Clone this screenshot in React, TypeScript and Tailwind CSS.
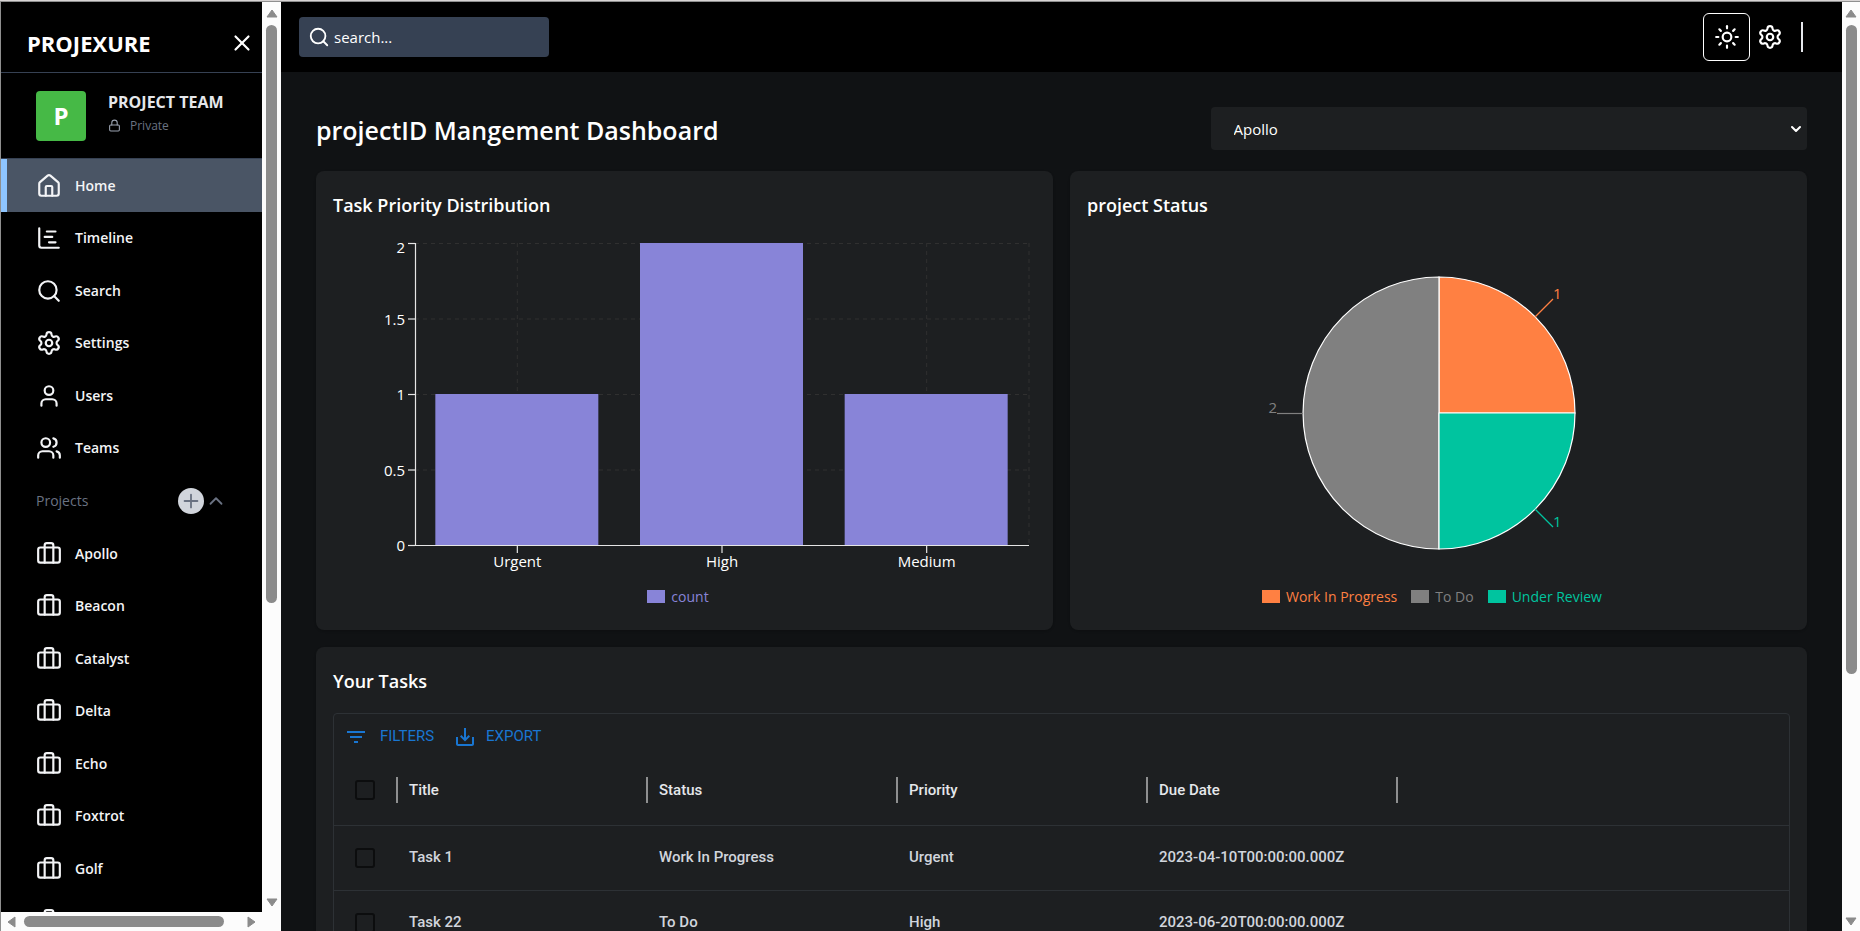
import React, { useState } from "react";
import {
  Briefcase,
  ChartGantt,
  ChevronDown,
  ChevronUp,
  House,
  Lock,
  LucideIcon,
  Plus,
  Search,
  Settings,
  Sun,
  User,
  Users,
  X,
} from "lucide-react";

interface Task {
  title: string;
  status: string;
  priority: string;
  dueDate: string;
}

const links: { label: string; icon: LucideIcon }[] = [
  { label: "Home", icon: House },
  { label: "Timeline", icon: ChartGantt },
  { label: "Search", icon: Search },
  { label: "Settings", icon: Settings },
  { label: "Users", icon: User },
  { label: "Teams", icon: Users },
];

const projects = ["Apollo", "Beacon", "Catalyst", "Delta", "Echo", "Foxtrot", "Golf", "Hotel"];

const priorities = [
  { name: "Urgent", count: 1 },
  { name: "High", count: 2 },
  { name: "Medium", count: 1 },
];

const statuses = [
  { name: "Work In Progress", color: "#ff8042" },
  { name: "To Do", color: "#808080" },
  { name: "Under Review", color: "#00c49f" },
];

const tasks: Task[] = [
  { title: "Task 1", status: "Work In Progress", priority: "Urgent", dueDate: "2023-04-10T00:00:00.000Z" },
  { title: "Task 22", status: "To Do", priority: "High", dueDate: "2023-06-20T00:00:00.000Z" },
];

const columns = ["Title", "Status", "Priority", "Due Date"];

function VerticalScrollbar({ width, thumb }: { width: string; thumb: string }) {
  return (
    <div className={`flex shrink-0 flex-col items-center bg-[#fcfcfc] pt-[7px] pb-[5px] ${width}`}>
      <svg width="12" height="9" viewBox="0 0 12 9" className="mb-[7px] shrink-0">
        <path d="M6 1 11 8H1z" fill="#8b8b8b" stroke="#8b8b8b" strokeLinejoin="round" />
      </svg>
      <div className="min-h-0 w-full flex-1">
        <div className={`mx-auto w-[11px] rounded-full bg-[#8b8b8b] ${thumb}`} />
      </div>
      <svg width="12" height="9" viewBox="0 0 12 9" className="shrink-0">
        <path d="M6 8 11 1H1z" fill="#8b8b8b" stroke="#8b8b8b" strokeLinejoin="round" />
      </svg>
    </div>
  );
}

function HorizontalScrollbar() {
  return (
    <div className="flex h-[19px] shrink-0 items-center bg-[#fcfcfc] px-[6px]">
      <svg width="9" height="12" viewBox="0 0 9 12" className="mr-2 shrink-0">
        <path d="M1 6 8 1v10z" fill="#8b8b8b" stroke="#8b8b8b" strokeLinejoin="round" />
      </svg>
      <div className="flex-1">
        <div className="h-[11px] w-[200px] rounded-full bg-[#8b8b8b]" />
      </div>
      <svg width="9" height="12" viewBox="0 0 9 12" className="shrink-0">
        <path d="M8 6 1 1v10z" fill="#8b8b8b" stroke="#8b8b8b" strokeLinejoin="round" />
      </svg>
    </div>
  );
}

function SidebarLink({ label, icon: Icon, active }: { label: string; icon: LucideIcon; active?: boolean }) {
  return (
    <li className="shrink-0 odd:h-[53px] even:h-[52px]">
      <a href="#" className={`flex h-full items-center ${active ? "bg-gray-600" : ""}`}>
        <span className={`w-[6px] self-stretch ${active ? "bg-blue-300" : ""}`} />
        <Icon size={26} strokeWidth={2} className="ml-[29px] text-gray-100" />
        <span className="ml-[13px] text-[14px] leading-[18px] font-semibold text-gray-100">{label}</span>
      </a>
    </li>
  );
}

function Sidebar() {
  const [showProjects, setShowProjects] = useState(true);

  return (
    <aside className="flex w-[281px] shrink-0 border-l border-[#8f8f8f]">
      <div className="flex min-w-0 flex-1 flex-col">
        <div className="flex min-h-0 flex-1 flex-col overflow-hidden bg-black">
          <div className="flex h-[70px] shrink-0 items-center justify-between pt-3 pr-[6px] pl-[26px]">
            <span className="text-[22px] font-bold text-white">PROJEXURE</span>
            <button aria-label="Close sidebar" className="p-[1px]">
              <X size={26} className="text-white" />
            </button>
          </div>
          <div className="flex h-[87px] shrink-0 items-center gap-[22px] border-y border-gray-700 pl-[35px]">
            <div className="flex h-[50px] w-[50px] items-center justify-center rounded bg-[#46b946] text-[24px] leading-[26px] font-bold text-white">
              P
            </div>
            <div className="pb-1">
              <h3 className="text-[16px] leading-[20px] font-bold text-gray-200">PROJECT TEAM</h3>
              <div className="mt-1 flex items-center gap-[9px]">
                <Lock size={13} className="text-gray-400" />
                <p className="text-[12px] leading-[20px] text-gray-500">Private</p>
              </div>
            </div>
          </div>
          <ul className="flex shrink-0 flex-col">
            {links.map((link, i) => (
              <SidebarLink key={link.label} label={link.label} icon={link.icon} active={i === 0} />
            ))}
          </ul>
          <div className="flex h-[53px] shrink-0 items-center pr-[35px] pl-[35px] text-gray-500">
            <span className="flex-1 text-[14px]">Projects</span>
            <button aria-label="New project" className="rounded-full bg-gray-300 p-[2px]">
              <Plus size={22} strokeWidth={2} className="text-gray-500" />
            </button>
            <button aria-label="Toggle projects" onClick={() => setShowProjects(!showProjects)} className="ml-[1px]">
              <ChevronUp size={22} className="text-gray-500" />
            </button>
          </div>
          {showProjects && (
            <ul className="flex shrink-0 flex-col">
              {projects.map((project) => (
                <SidebarLink key={project} label={project} icon={Briefcase} />
              ))}
            </ul>
          )}
        </div>
        <HorizontalScrollbar />
      </div>
      <div className="flex flex-col bg-[#fcfcfc]">
        <div className="flex min-h-0 flex-1">
          <VerticalScrollbar width="w-[19px]" thumb="h-[578px]" />
        </div>
        <div className="h-[19px]" />
      </div>
    </aside>
  );
}

function Navbar() {
  return (
    <header className="flex h-[70px] shrink-0 items-center justify-between bg-black pr-[39px] pl-[18px]">
      <label className="flex h-10 w-[250px] items-center gap-1 rounded bg-gray-700 pl-[9px] text-white">
        <Search size={22} className="shrink-0" />
        <input
          type="search"
          aria-label="Search"
          placeholder="search..."
          className="w-full bg-transparent text-[15px] text-white outline-none placeholder:text-white"
        />
      </label>
      <div className="flex items-center">
        <button aria-label="Light mode" className="flex h-[48px] w-[47px] items-center justify-center rounded-md border border-white">
          <Sun size={26} className="text-white" />
        </button>
        <a href="#" aria-label="Settings" className="ml-[7px]">
          <Settings size={26} className="text-white" />
        </a>
        <div className="ml-[18px] h-[30px] w-[2px] bg-gray-200" />
      </div>
    </header>
  );
}

function Legend({ items }: { items: { name: string; color: string }[] }) {
  return (
    <ul className="flex h-[33px] items-center justify-center gap-[14px] pr-[13px]">
      {items.map((item) => (
        <li key={item.name} className="flex items-center gap-[6px] text-[14px]" style={{ color: item.color }}>
          <span className="h-[13px] w-[18px]" style={{ backgroundColor: item.color }} />
          {item.name}
        </li>
      ))}
    </ul>
  );
}

function PriorityChart() {
  const left = 82;
  const right = 696;
  const top = 5;
  const bottom = 307;
  const band = (right - left) / priorities.length;
  const y = (value: number) => bottom - ((bottom - top) * value) / 2;
  const centers = priorities.map((_, i) => left + band * (i + 0.5));

  return (
    <svg viewBox="0 0 703 342" className="block w-full" fontSize="15">
      <g stroke="#303030" strokeDasharray="4 4">
        {[2, 1.5, 1, 0.5].map((tick) => (
          <line key={tick} x1={left} x2={right} y1={y(tick) + 0.5} y2={y(tick) + 0.5} />
        ))}
        {[...centers, right].map((x) => (
          <line key={x} x1={x} x2={x} y1={top} y2={bottom} />
        ))}
      </g>
      <g stroke="#e5e5e5" strokeWidth="1.2">
        <line x1={left + 0.5} x2={left + 0.5} y1={top} y2={bottom + 1} />
        <line x1={left} x2={right} y1={bottom + 0.5} y2={bottom + 0.5} />
        {[0, 0.5, 1, 1.5, 2].map((tick) => (
          <line key={tick} x1={left - 7} x2={left} y1={y(tick) + 0.5} y2={y(tick) + 0.5} />
        ))}
        {centers.map((x) => (
          <line key={x} x1={x} x2={x} y1={bottom} y2={bottom + 8} />
        ))}
      </g>
      {priorities.map((item, i) => (
        <rect
          key={item.name}
          x={centers[i] - 82}
          y={y(item.count)}
          width="163"
          height={bottom - y(item.count)}
          fill="#8884d8"
        />
      ))}
      <g fill="#ffffff">
        {[0, 0.5, 1, 1.5, 2].map((tick) => (
          <text key={tick} x={left - 10} y={y(tick) + (tick === 2 ? 10 : 6)} textAnchor="end">
            {tick}
          </text>
        ))}
        {priorities.map((item, i) => (
          <text key={item.name} x={centers[i]} y={bottom + 22} textAnchor="middle">
            {item.name}
          </text>
        ))}
      </g>
    </svg>
  );
}

function StatusChart() {
  return (
    <svg viewBox="0 0 703 342" className="block w-full" fontSize="15">
      <g stroke="#ffffff" strokeWidth="1.2">
        <path d="M352 175V39a136 136 0 0 1 136 136z" fill="#ff8042" />
        <path d="M352 175V39a136 136 0 0 0 0 272z" fill="#808080" />
        <path d="M352 175H488a136 136 0 0 1 -136 136z" fill="#00c49f" />
      </g>
      <path d="M448 79 466 61" stroke="#ff8042" strokeWidth="1.2" />
      <path d="M216 175.5H190" stroke="#808080" strokeWidth="1.2" />
      <path d="M448 271 466 289" stroke="#00c49f" strokeWidth="1.2" />
      <text x="466" y="61" fill="#ff8042">1</text>
      <text x="190" y="175" textAnchor="end" fill="#808080">2</text>
      <text x="466" y="289" fill="#00c49f">1</text>
    </svg>
  );
}

function Checkbox({ label }: { label: string }) {
  return (
    <input
      type="checkbox"
      aria-label={label}
      className="ml-[21px] block h-5 w-5 appearance-none rounded-[3px] border-2 border-[#0c0d0e]"
    />
  );
}

function TaskTable() {
  return (
    <div className="mt-[17px] rounded border border-[#2d3135] font-['Roboto',sans-serif] text-[15px]">
      <div className="flex h-[41px] items-center gap-[19px] pt-1 pl-[10px] text-[#1976d2]">
        <button className="flex items-center gap-3">
          <svg width="24" height="24" viewBox="0 0 24 24" fill="currentColor">
            <path d="M10 18h4v-2h-4v2zM3 6v2h18V6H3zm3 7h12v-2H6v2z" />
          </svg>
          FILTERS
        </button>
        <button className="flex items-center gap-[9px]">
          <svg width="24" height="24" viewBox="0 0 24 24" fill="currentColor">
            <path d="M19 12v7H5v-7H3v7c0 1.1.9 2 2 2h14c1.1 0 2-.9 2-2v-7h-2zm-6 .67 2.59-2.58L17 11.5l-5 5-5-5 1.41-1.41L11 12.67V3h2v9.67z" />
          </svg>
          EXPORT
        </button>
      </div>
      <table className="w-full table-fixed border-collapse text-left">
        <colgroup>
          <col className="w-[62px]" />
          <col className="w-[250px]" />
          <col className="w-[250px]" />
          <col className="w-[250px]" />
          <col className="w-[250px]" />
          <col />
        </colgroup>
        <thead>
          <tr className="h-[70px] border-b border-[#2d3135] text-gray-200">
            <th className="p-0">
              <Checkbox label="Select all tasks" />
            </th>
            {columns.map((column) => (
              <th key={column} className="p-0 font-medium">
                <div className="flex h-[26px] items-center border-l-2 border-[#8e8f90] pl-[11px]">{column}</div>
              </th>
            ))}
            <th className="p-0">
              <div className="h-[26px] border-l-2 border-[#8e8f90]" />
            </th>
          </tr>
        </thead>
        <tbody>
          {tasks.map((task) => (
            <tr key={task.title} className="h-[65px] border-b border-[#2d3135] font-medium text-gray-300">
              <td className="p-0">
                <Checkbox label={`Select ${task.title}`} />
              </td>
              <td className="p-0 pl-[13px]">{task.title}</td>
              <td className="p-0 pl-[13px]">{task.status}</td>
              <td className="p-0 pl-[13px]">{task.priority}</td>
              <td className="p-0 pl-[13px]">{task.dueDate}</td>
              <td className="p-0" />
            </tr>
          ))}
        </tbody>
      </table>
    </div>
  );
}

export default function App() {
  const [project, setProject] = useState("Apollo");

  return (
    <div className="flex h-screen flex-col overflow-hidden bg-[#101214] font-['Open_Sans',sans-serif] text-white">
      <div className="h-[2px] shrink-0 border-b border-[#8f8f8f] bg-[#d8d4d4]" />
      <div className="flex min-h-0 flex-1">
        <Sidebar />
        <div className="flex min-w-0 flex-1 flex-col overflow-hidden">
          <Navbar />
          <main className="px-[35px] pt-[35px]">
            <div className="mb-[21px] grid grid-cols-[3fr_2fr] items-center">
              <h1 className="pt-[2px] text-[25px] leading-[36px] font-semibold">projectID Mangement Dashboard</h1>
              <div className="relative">
                <select
                  aria-label="Project"
                  value={project}
                  onChange={(e) => setProject(e.target.value)}
                  className="block h-[43px] w-full appearance-none rounded bg-[#1d1f21] px-[23px] pt-[2px] text-[15px]"
                >
                  {projects.map((name) => (
                    <option key={name}>{name}</option>
                  ))}
                </select>
                <ChevronDown size={16} strokeWidth={3} className="pointer-events-none absolute top-[14px] right-[3px]" />
              </div>
            </div>
            <div className="grid grid-cols-2 gap-[17px]">
              <section className="rounded-lg bg-[#1d1f21] p-[17px] shadow">
                <h3 className="mb-4 text-[18px] leading-[34px] font-semibold">Task Priority Distribution</h3>
                <PriorityChart />
                <Legend items={[{ name: "count", color: "#8884d8" }]} />
              </section>
              <section className="rounded-lg bg-[#1d1f21] p-[17px] shadow">
                <h3 className="mb-4 text-[18px] leading-[34px] font-semibold">project Status</h3>
                <StatusChart />
                <Legend items={statuses} />
              </section>
              <section className="col-span-2 rounded-lg bg-[#1d1f21] p-[17px] shadow">
                <h3 className="-mb-[2px] text-[18px] leading-[34px] font-semibold">Your Tasks</h3>
                <TaskTable />
              </section>
            </div>
          </main>
        </div>
        <VerticalScrollbar width="w-[18px]" thumb="h-[649px]" />
      </div>
    </div>
  );
}
